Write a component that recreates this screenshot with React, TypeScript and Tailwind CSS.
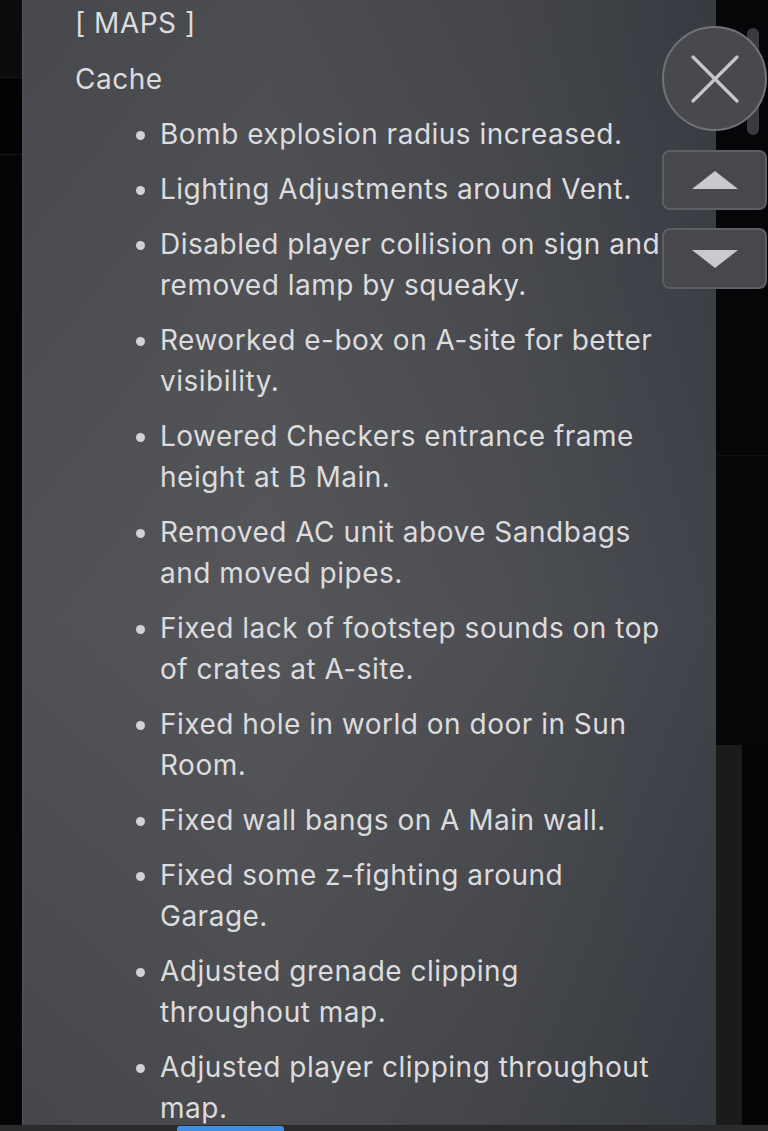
import React from "react";

const notes: string[][] = [
  ["Bomb explosion radius increased."],
  ["Lighting Adjustments around Vent."],
  ["Disabled player collision on sign and", "removed lamp by squeaky."],
  ["Reworked e-box on A-site for better", "visibility."],
  ["Lowered Checkers entrance frame", "height at B Main."],
  ["Removed AC unit above Sandbags", "and moved pipes."],
  ["Fixed lack of footstep sounds on top", "of crates at A-site."],
  ["Fixed hole in world on door in Sun", "Room."],
  ["Fixed wall bangs on A Main wall."],
  ["Fixed some z-fighting around", "Garage."],
  ["Adjusted grenade clipping", "throughout map."],
  ["Adjusted player clipping throughout", "map."],
];

const Note = ({ lines }: { lines: string[] }) => (
  <li className="flex items-start mt-[14px]">
    <span className="w-[9px] h-[9px] rounded-full bg-[#d2d2d5] mt-[17px] ml-[-24px] mr-[15px] shrink-0" />
    <span className="flex flex-col">
      {lines.map((l) => (
        <span key={l} className="whitespace-nowrap">
          {l}
        </span>
      ))}
    </span>
  </li>
);

export default function App() {
  return (
    <div
      className="relative w-[768px] h-[1131px] overflow-hidden bg-[#040406] flex flex-col"
      style={{ fontFamily: '"Inter", "Noto Sans", sans-serif' }}
    >
      <div className="flex flex-1 min-h-0">
        {/* left edge of the page behind */}
        <div className="w-[22px] flex flex-col">
          <div className="h-[78px] bg-[#0b0b0d] border-b border-[#1a1a1c]" />
          <div className="h-[77px] bg-[#030304] border-b border-[#161618]" />
          <div className="flex-1 bg-[#040406]" />
        </div>

        {/* patch notes panel */}
        <div className="w-[694px] overflow-hidden bg-[linear-gradient(180deg,rgba(0,0,0,0.05)_0%,rgba(255,255,255,0.03)_55%,rgba(0,0,0,0.07)_100%),linear-gradient(90deg,#4b4c51_0%,#505155_35%,#47494e_70%,#3a3d44_100%)] border-l border-[#55565b] pl-[52px] text-[#dcdcde] text-[28px] leading-[41px] tracking-[0.5px] [font-variant-ligatures:none]">
          <div className="pt-[3px]">[ MAPS ]</div>
          <div className="mt-[15px]">Cache</div>
          <ul className="pl-[85px]">
            {notes.map((n) => (
              <Note key={n[0]} lines={n} />
            ))}
          </ul>
        </div>

        {/* right side behind the panel */}
        <div className="flex-1 flex flex-col">
          <div className="h-[455px] bg-[#060608]" />
          <div className="h-[290px] bg-[#07070a] border-t border-[#111114]" />
          <div className="flex-1 flex">
            <div className="w-[26px] bg-[#1c1b1a]" />
            <div className="flex-1 bg-[#050507]" />
          </div>
        </div>
      </div>

      {/* bottom bar */}
      <div className="h-[6px] bg-[#2a2b2d] flex">
        <div className="ml-[177px] w-[107px] h-[5px] mt-[1px] rounded-t-[3px] bg-[#3d8ee4]" />
      </div>

      {/* scrollbar thumb */}
      <div className="absolute left-[747px] top-[28px] w-[12px] h-[107px] rounded-full bg-[#3a3b41]" />

      {/* close button */}
      <button className="absolute left-[662px] top-[26px] w-[105px] h-[105px] rounded-full bg-[#48494d] border-2 border-[#727377] flex items-center justify-center">
        <svg width="50" height="50" viewBox="0 0 50 50">
          <path d="M3 3 L47 47 M47 3 L3 47" stroke="#c6c6ca" strokeWidth="3.2" strokeLinecap="round" />
        </svg>
      </button>

      {/* scroll up / down */}
      <button className="absolute left-[662px] top-[150px] w-[105px] h-[60px] rounded-[8px] bg-[#47484c] border-2 border-[#5e5f63] flex items-center justify-center">
        <svg width="46" height="18" viewBox="0 0 46 18">
          <path d="M23 0 L46 18 L0 18 Z" fill="#c9c9ce" />
        </svg>
      </button>
      <button className="absolute left-[662px] top-[228px] w-[105px] h-[61px] rounded-[8px] bg-[#47484c] border-2 border-[#5e5f63] flex items-center justify-center">
        <svg width="46" height="18" viewBox="0 0 46 18">
          <path d="M0 0 L46 0 L23 18 Z" fill="#c9c9ce" />
        </svg>
      </button>
    </div>
  );
}
